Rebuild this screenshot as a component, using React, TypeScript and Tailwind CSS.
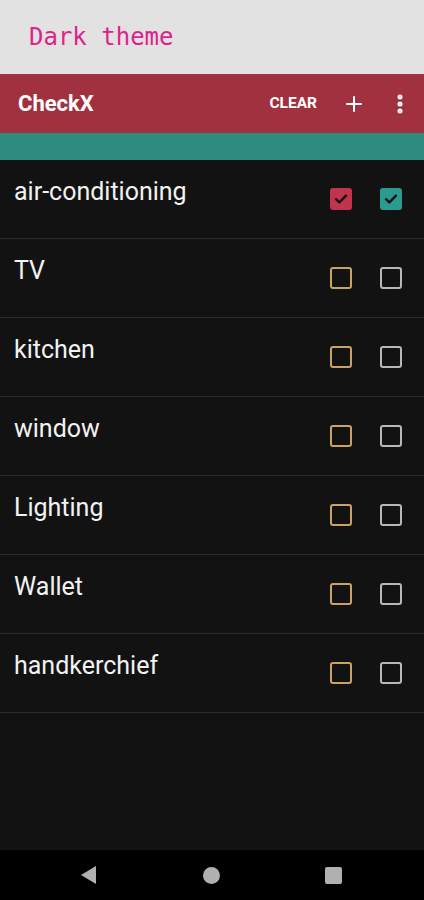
import { Plus, EllipsisVertical } from "lucide-react";

const items = [
  { label: "air-conditioning", a: true, b: true },
  { label: "TV", a: false, b: false },
  { label: "kitchen", a: false, b: false },
  { label: "window", a: false, b: false },
  { label: "Lighting", a: false, b: false },
  { label: "Wallet", a: false, b: false },
  { label: "handkerchief", a: false, b: false },
];

function Box({ checked, tone }: { checked: boolean; tone: "red" | "teal" }) {
  if (checked) {
    return (
      <div
        className={
          tone === "red"
            ? "w-[22px] h-[22px] rounded-[3px] bg-[#c2334e] flex items-center justify-center"
            : "w-[22px] h-[22px] rounded-[3px] bg-[#2a9b8e] flex items-center justify-center"
        }
      >
        <svg width="14" height="14" viewBox="0 0 14 14" fill="none">
          <path
            d="M2 7.2 L5.4 10.4 L12 3.6"
            stroke="#141414"
            strokeWidth="2.4"
            strokeLinecap="round"
            strokeLinejoin="round"
          />
        </svg>
      </div>
    );
  }
  return (
    <div
      className={
        tone === "red"
          ? "w-[22px] h-[22px] rounded-[3px] border-2 border-[#c9a267]"
          : "w-[22px] h-[22px] rounded-[3px] border-2 border-[#b8b8b8]"
      }
    />
  );
}

export default function App() {
  return (
    <div className="w-[424px] h-[900px] flex flex-col bg-[#121212] font-['Roboto',sans-serif]">
      <div className="h-[74px] bg-[#e2e2e2] flex items-center pl-[29px] shrink-0">
        <span className="font-['DejaVu_Sans_Mono',monospace] text-[24px] text-[#df228b]">
          Dark theme
        </span>
      </div>

      <header className="h-[59px] bg-[#a2313f] flex items-center justify-between pl-[18px] pr-[12px] shrink-0">
        <h1 className="text-[22px] font-bold text-white">CheckX</h1>
        <div className="flex items-center">
          <span className="text-[15.5px] font-bold text-white">CLEAR</span>
          <Plus className="ml-[25px] text-white" size={24} strokeWidth={2} />
          <EllipsisVertical className="ml-[22px] text-white" size={24} strokeWidth={3} />
        </div>
      </header>

      <div className="h-[27px] bg-[#2d8b80] shrink-0" />

      <ul className="shrink-0">
        {items.map((it) => (
          <li
            key={it.label}
            className="h-[79px] border-b border-[#2c2c2c] flex justify-between pl-[14px] pr-[22px]"
          >
            <span className="pt-[17px] leading-[30px] text-[25px] text-[#f2f2f2]">{it.label}</span>
            <div className="flex items-center gap-[28px] pb-[1px]">
              <Box checked={it.a} tone="red" />
              <Box checked={it.b} tone="teal" />
            </div>
          </li>
        ))}
      </ul>

      <div className="flex-1" />

      <nav className="h-[50px] bg-black flex items-center gap-[105px] pl-[80px] shrink-0">
        <svg width="18" height="20" viewBox="0 0 18 20">
          <path d="M16 1 L16 19 L1 10 Z" fill="#b0b0b0" />
        </svg>
        <div className="w-[17px] h-[17px] rounded-full bg-[#b0b0b0]" />
        <div className="w-[17px] h-[17px] rounded-[2px] bg-[#b0b0b0]" />
      </nav>
    </div>
  );
}
